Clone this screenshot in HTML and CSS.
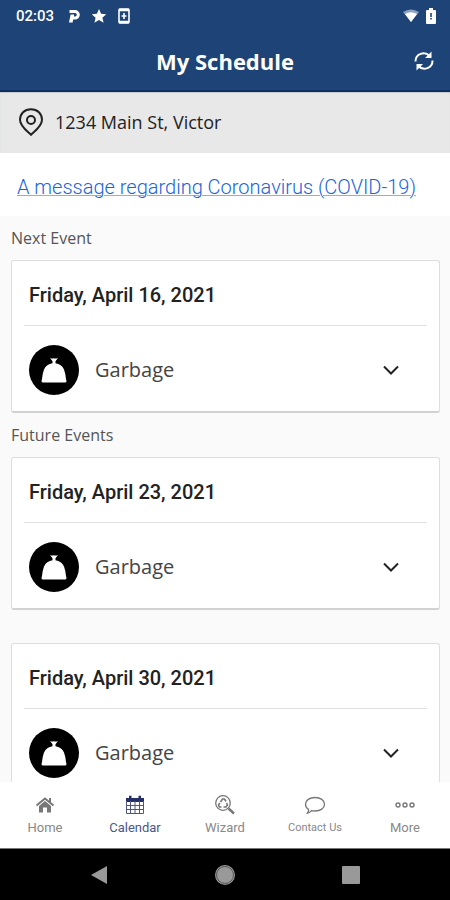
FILE: index.html
```html
<!DOCTYPE html>
<html lang="en">
<head>
    <meta charset="UTF-8">
    <meta name="viewport" content="width=device-width, initial-scale=1.0">
    <title>My Schedule</title>
    <link rel="stylesheet" href="styles.css">
</head>
<body>
    <!-- shared icons -->
    <svg class="sprite" aria-hidden="true">
        <symbol id="bag" viewBox="0 0 50 50">
            <circle cx="25" cy="25" r="25" fill="#000"/>
            <path d="M21 13q2 1 4 .3 2 .7 4-.3l-2.500 3.200v2q6 .8 8.500 6.300 1.500 4 2 9.500l.5 2q0 1.500-1.500 1.500h-22q-1.500 0-1.500-1.500l.5-2q.5-5.500 2-9.500 2.500-5.500 8.500-6.300v-2z" fill="#fff"/>
        </symbol>
        <symbol id="chevron" viewBox="0 0 18 10">
            <path d="M2 1.500l7 7 7-7" fill="none" stroke="#222" stroke-width="2"/>
        </symbol>
    </svg>

    <header class="header">
        <div class="status">
            <span class="time">02:03</span>
            <svg width="12" height="16" viewBox="0 0 12 16"><path d="M1.500 2H7a4.800 4.800 0 0 1 0 9.600H5.200L4.600 14.500H1L2.600 6.500H6V8.600H7A1.800 1.800 0 0 0 7 5H1.500z" fill="#fff"/></svg>
            <svg width="14" height="16" viewBox="1 0 14 16"><path d="M8 1l2.100 4.800 5.200.5-3.900 3.400 1.200 5.100L8 12.100l-4.600 2.700 1.200-5.100L.7 6.300l5.200-.5z" fill="#fff"/></svg>
            <svg width="12" height="16" viewBox="0 0 12 16"><rect x="1" y="1" width="10" height="14" rx="1" fill="none" stroke="#fff" stroke-width="1.600"/><path d="M1 2h10M1 14h10" stroke="#fff" stroke-width="2.400"/><path d="M6 5v6M3.500 8h5" stroke="#fff" stroke-width="1.600"/></svg>
            <span class="status-right">
                <svg width="18" height="14" viewBox="0 0 18 14"><path d="M1 3q8-5 16 0L9 13z" fill="#8ea2bf"/><path d="M3 5q6-3.500 12 0L9 13z" fill="#fff"/></svg>
                <svg width="10" height="16" viewBox="0 0 10 16"><path d="M3 0h4v2h2q1 0 1 1v12q0 1-1 1H1q-1 0-1-1V3q0-1 1-1h2z" fill="#fff"/><path d="M5 5v4M5 10v1.500" stroke="#1d4377" stroke-width="1.600"/></svg>
            </span>
        </div>
        <div class="title-bar">
            <h1>My Schedule</h1>
            <button class="refresh" type="button" aria-label="Refresh">
                <svg width="20" height="20" viewBox="0 0 20 20">
                    <path d="M1.500 10.500A8 8 0 0 1 15.500 5M18.500 9.500A8 8 0 0 1 4.500 15" fill="none" stroke="#fff" stroke-width="2"/>
                    <path d="M17.500 .5v6.500H11zM2.500 19.500V13H9z" fill="#fff"/>
                </svg>
            </button>
        </div>
    </header>

    <div class="address">
        <svg width="26" height="28" viewBox="0 0 26 28">
            <path d="M13 1.200C6.500 1.200 2 5.800 2 11.700 2 18 8.500 22.500 13 26.800 17.500 22.500 24 18 24 11.700 24 5.800 19.500 1.200 13 1.200z" fill="none" stroke="#222" stroke-width="2"/>
            <circle cx="13" cy="12" r="4" fill="none" stroke="#222" stroke-width="2"/>
        </svg>
        <span>1234 Main St, Victor</span>
    </div>

    <div class="message">
        <a href="#">A message regarding Coronavirus (COVID-19)</a>
    </div>

    <main class="events">
        <h2>Next Event</h2>
        <section class="card">
            <h3>Friday, April 16, 2021</h3>
            <button class="event" type="button">
                <svg class="bag"><use href="#bag"/></svg>
                <span>Garbage</span>
                <svg class="chevron"><use href="#chevron"/></svg>
            </button>
        </section>

        <h2>Future Events</h2>
        <section class="card">
            <h3>Friday, April 23, 2021</h3>
            <button class="event" type="button">
                <svg class="bag"><use href="#bag"/></svg>
                <span>Garbage</span>
                <svg class="chevron"><use href="#chevron"/></svg>
            </button>
        </section>
        <section class="card">
            <h3>Friday, April 30, 2021</h3>
            <button class="event" type="button">
                <svg class="bag"><use href="#bag"/></svg>
                <span>Garbage</span>
                <svg class="chevron"><use href="#chevron"/></svg>
            </button>
        </section>
    </main>

    <nav class="tabs">
        <a href="#">
            <svg width="20" height="20" viewBox="0 0 20 20"><path d="M1.500 10.500L10 3.500l8.500 7M15 3v4" fill="none" stroke="#777" stroke-width="2"/><path d="M4 11l6-5 6 5v6.500h-4V12.500H8v5H4z" fill="#777"/></svg>
            <span>Home</span>
        </a>
        <a href="#" class="active">
            <svg width="20" height="20" viewBox="0 0 20 20"><path d="M1 3h18v4H1zM4 .8h2.500V4H4zM13.500 .8H16V4h-2.500z" fill="#252f66"/><path d="M1.500 6v12.500h17V6M1.500 10.500h17M1.500 14.500h17M5.500 6v12.500M10 6v12.500M14.500 6v12.500" fill="none" stroke="#4d5687"/></svg>
            <span>Calendar</span>
        </a>
        <a href="#">
            <svg width="22" height="20" viewBox="0 0 22 20"><g fill="none" stroke="#777" stroke-width="1.300"><circle cx="9" cy="8" r="7.300"/><path d="M6.500 7l2-3h2l1.500 2.500M12.500 8l1 2-1.500 2H9.500M7.500 12H5.500l-1-2 1.300-2" stroke-width="1.600"/></g><path d="M14.500 13.500l5.500 5" stroke="#777" stroke-width="2.400"/></svg>
            <span>Wizard</span>
        </a>
        <a href="#">
            <svg width="22" height="20" viewBox="0 0 22 20"><path d="M11 2.500c5.500 0 9.500 2.800 9.500 6.800s-4 6.700-9.500 6.700q-2 0-3.500-.4-1.500 2-4 2.400 1.500-2 1-3.600Q1.500 12.500 1.500 9.300c0-4 4-6.800 9.500-6.800z" fill="none" stroke="#777" stroke-width="1.300"/></svg>
            <span class="small">Contact Us</span>
        </a>
        <a href="#">
            <svg width="20" height="20" viewBox="0 0 20 20"><g fill="none" stroke="#777" stroke-width="1.400"><circle cx="3" cy="10" r="2"/><circle cx="10" cy="10" r="2"/><circle cx="17" cy="10" r="2"/></g></svg>
            <span>More</span>
        </a>
    </nav>

    <div class="system-nav">
        <button type="button" aria-label="Back"><svg width="18" height="20" viewBox="0 0 18 20"><path d="M1 10L17 1v18z" fill="#999"/></svg></button>
        <button type="button" aria-label="Home"><svg width="22" height="22" viewBox="0 0 22 22"><circle cx="11" cy="11" r="10" fill="#999"/><circle cx="11" cy="11" r="8.500" fill="none" stroke="#555"/></svg></button>
        <button type="button" aria-label="Recent apps"><svg width="18" height="18" viewBox="0 0 18 18"><rect width="18" height="18" rx="1" fill="#999"/></svg></button>
    </div>
</body>
</html>
```
FILE: styles.css
```css
* {
    box-sizing: border-box;
}
body {
    margin: 0;
    height: 100vh;
    display: flex;
    flex-direction: column;
    overflow: hidden;
    background-color: #fafafa;
    font-family: "Open Sans", sans-serif;
    color: #222;
}
button {
    border: none;
    padding: 0;
    background: none;
    font: inherit;
    color: inherit;
    cursor: pointer;
}
svg {
    display: block;
    flex-shrink: 0;
}
h1, h2, h3 {
    margin: 0;
}
.sprite {
    position: absolute;
    width: 0;
    height: 0;
}

/* Header */
.header {
    background-color: #1d4377;
    border-bottom: 2px solid #0e2d62;
    color: white;
}
.status {
    display: flex;
    align-items: center;
    gap: 12px;
    height: 32px;
    padding: 0 14px 0 16px;
}
.time {
    font-family: Roboto, sans-serif;
    font-size: 15px;
    font-weight: 500;
    margin-right: 2px;
}
.status-right {
    display: flex;
    align-items: center;
    gap: 6px;
    margin-left: auto;
}
.title-bar {
    display: grid;
    grid-template-columns: 1fr auto 1fr;
    align-items: center;
    height: 58px;
    padding: 0 16px;
}
.title-bar h1 {
    grid-column: 2;
    font-size: 22px;
    font-weight: 700;
    line-height: 30px;
}
.refresh {
    justify-self: end;
}

/* Address and notice */
.address {
    display: flex;
    align-items: center;
    gap: 11px;
    height: 61px;
    padding: 0 18px 2px;
    background-color: #e8e8e8;
    box-shadow: inset 0 1px 1px #c4c8ce;
    font-size: 18px;
}
.message {
    padding: 23px 17px 17px;
    background-color: white;
    font-family: Roboto, sans-serif;
    font-size: 20px;
    font-weight: 300;
    line-height: 23px;
}
.message a {
    color: #1765dd;
    text-decoration-color: #8fabef;
    text-decoration-thickness: 1px;
}

/* Events */
.events {
    flex: 1;
    min-height: 0;
    overflow: hidden;
    padding: 0 10px 0 11px;
}
.events h2 {
    font-size: 16px;
    font-weight: 400;
    line-height: 44px;
    color: #555;
}
.card {
    background-color: white;
    border: 1px solid #dedede;
    border-bottom: 2px solid #d2d2d2;
    border-radius: 3px;
    padding: 0 12px;
}
.card + .card {
    margin-top: 33px;
}
.card h3 {
    padding: 4px 5px 0;
    border-bottom: 1px solid #e0e0e0;
    font-family: Roboto, sans-serif;
    font-size: 20px;
    font-weight: 500;
    line-height: 60px;
}
.event {
    display: flex;
    align-items: center;
    width: 100%;
    height: 85px;
    padding: 2px 27px 0 5px;
    font-size: 20px;
    color: #444;
}
.bag {
    width: 50px;
    height: 50px;
    margin-right: 16px;
}
.chevron {
    width: 18px;
    height: 10px;
    margin-left: auto;
}

/* Bottom tabs */
.tabs {
    display: flex;
    height: 67px;
    padding-top: 13px;
    background-color: white;
    border-bottom: 1px solid #777;
}
.tabs a {
    flex: 1;
    display: flex;
    flex-direction: column;
    align-items: center;
    gap: 4px;
    font-family: Roboto, sans-serif;
    font-size: 13px;
    line-height: 18px;
    color: #888;
    text-decoration: none;
}
.tabs .active {
    color: #4d5687;
}
.tabs .small {
    font-size: 11px;
}

/* System navigation */
.system-nav {
    display: flex;
    justify-content: space-between;
    align-items: center;
    height: 51px;
    padding: 0 20%;
    background-color: black;
}
```
